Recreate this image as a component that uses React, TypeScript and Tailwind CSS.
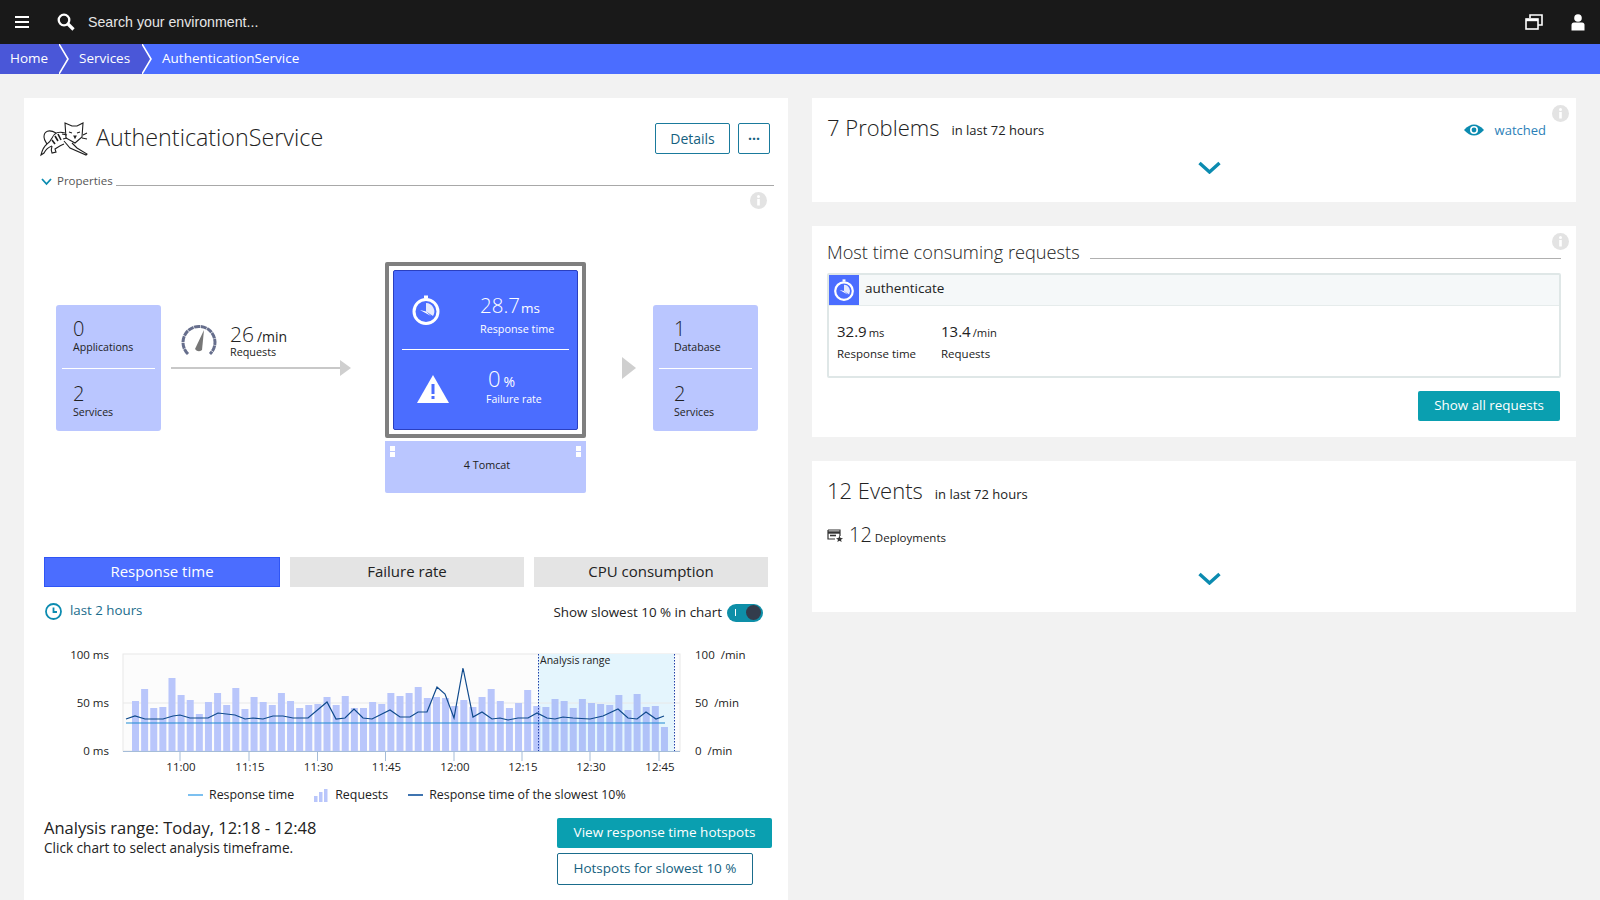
const barHeights = [
  50, 62, 43, 44, 73, 56, 51, 37, 49, 58, 46, 63, 42, 54, 49, 46, 58, 50, 43, 46, 47, 54, 46, 55, 43, 43, 49, 47, 58, 55,
  58, 64, 53, 54, 53, 45, 51, 44, 54, 62, 50, 43, 48, 61, 45, 44, 52, 50, 43, 52, 48, 47, 46, 56, 41, 57, 44, 45, 24,
];

// slowest 10% line, read off the chart
const slowLine = [
  [126, 719], [135, 716], [145, 719], [163, 719], [173, 716], [180, 715], [190, 718], [208, 718], [218, 713], [235, 715],
  [245, 719], [253, 718], [263, 719], [273, 716], [283, 716], [293, 718], [308, 718], [327, 702], [336, 719], [345, 718],
  [354, 709], [363, 718], [372, 719], [390, 710], [400, 717], [410, 717], [418, 712], [427, 712], [437, 687], [445, 694],
  [454, 718], [463, 668], [473, 717], [482, 712], [492, 719], [500, 718], [508, 720], [518, 718], [528, 718], [537, 713],
  [547, 718], [555, 719], [563, 717], [573, 718], [590, 719], [603, 716], [618, 709], [628, 718], [637, 719], [646, 712],
  [656, 719], [664, 716],
];

const timeTicks = [
  ["11:00", 180], ["11:15", 249], ["11:30", 317.5], ["11:45", 385.5], ["12:00", 454], ["12:15", 522], ["12:30", 590], ["12:45", 659],
] as const;

function Info({ className }: { className: string }) {
  return (
    <svg className={className} width="17" height="17" viewBox="0 0 17 17">
      <circle cx="8.5" cy="8.5" r="8.5" fill="#e3e3e3" />
      <rect x="7.2" y="7" width="2.6" height="6.5" fill="#fff" />
      <circle cx="8.5" cy="4.6" r="1.5" fill="#fff" />
    </svg>
  );
}

function ChevronTeal() {
  return (
    <svg width="23" height="13" viewBox="0 0 23 13">
      <path d="M1.5 2 L11.5 11 L21.5 2" fill="none" stroke="#0b8bb0" strokeWidth="3.4" />
    </svg>
  );
}

function Stopwatch({ size, stroke = 3 }: { size: number; stroke?: number }) {
  return (
    <svg width={size} height={size} viewBox="0 0 30 30">
      <circle cx="15" cy="16.5" r="12" fill="none" stroke="#fff" strokeWidth={stroke} />
      <rect x="13" y="0.5" width="4" height="3" fill="#fff" />
      <path d="M15 16.5 L15 8 A8.5 8.5 0 0 1 22 21 Z" fill="#fff" opacity="0.85" />
      <path d="M15 16.5 L9 15 L20 21 Z" fill="#fff" />
    </svg>
  );
}

function TomcatLogo() {
  return (
    <svg width="48" height="36" viewBox="0 0 48 36" fill="none" stroke="#1f1f1f" strokeWidth="1.1">
      <path d="M25 2 L32 5 L37 5 L43 2 L42 16 L35 22 L26 17 Z" fill="#fff" />
      <path d="M29 11 L32 12 M37 12 L40 11 M34 15 L36 15 L35 17 Z M27 14 L22 13 M43 14 L47 12 M27 17 L23 18 M42 17 L47 18" />
      <path d="M25 12 C19 10 14 12 12 17 C10 21 9 22 7 23 C3 26 2 30 1 34 L4 32 C6 28 9 26 12 25" />
      <path d="M16 12 C9 8 4 10 4 16 C4 19 6 21 7 23" />
      <path d="M12 25 C11 28 11 30 12 32 L16 31 L15 28 C18 26 21 24 24 23" />
      <path d="M24 20 L30 27 L46 34 L47 33 L37 27 L32 22" />
      <path d="M15 15 L18 20 M18 13 L21 19 M12 19 L15 23" strokeWidth="1.6" />
    </svg>
  );
}

function Gauge() {
  return (
    <svg width="36" height="34" viewBox="0 0 36 34" fill="none">
      <path d="M7 30 A16 16 0 1 1 29 30" stroke="#666e8c" strokeWidth="3" strokeDasharray="6 0.6" />
      <path d="M14 25 L23 6 L21 26 Q17 29 14 25 Z" fill="#777" />
    </svg>
  );
}

function SideBox({ top, topLabel, bottom, bottomLabel, inset }: { top: string; topLabel: string; bottom: string; bottomLabel: string; inset: string }) {
  return (
    <div className="flex h-[126px] w-[105px] flex-col rounded-[3px] bg-[#bac6ff] px-[6px] text-[#222]">
      <div className={`h-[63px] pt-[12px] ${inset}`}>
        <div className="text-[20px] font-light leading-[23px]">{top}</div>
        <div className="text-[10.6px] leading-[14px]">{topLabel}</div>
      </div>
      <div className="h-px bg-white" />
      <div className={`pt-[13px] ${inset}`}>
        <div className="text-[20px] font-light leading-[23px]">{bottom}</div>
        <div className="text-[10.6px] leading-[14px]">{bottomLabel}</div>
      </div>
    </div>
  );
}

function ChartTab({ label, active }: { label: string; active?: boolean }) {
  return (
    <div
      className={
        active
          ? "flex h-[30px] flex-1 items-center justify-center border border-[#2f55f5] bg-[#4b6dff] pb-[1px] text-[15px] text-white"
          : "flex h-[30px] flex-1 items-center justify-center bg-[#e4e4e4] pb-[1px] text-[15px] text-[#222]"
      }
    >
      {label}
    </div>
  );
}

function Chart() {
  const labelClass = "fill-[#222] text-[11.5px]";
  return (
    <svg className="mt-[18px] block" width="764" height="145" viewBox="24 640 764 145">
      <rect x="123" y="654" width="557" height="97" fill="#fcfcfc" stroke="#e8e8e8" />
      <rect x="538" y="654" width="136" height="97" fill="#e4f5fd" />
      <line x1="123" y1="703" x2="680" y2="703" stroke="#e8e8e8" />
      {barHeights.map((h, i) => (
        <rect key={i} x={132 + i * 9.12} y={751 - h} width="7" height={h} fill={i > 44 ? "#b0c2f8" : "#b9c6fb"} />
      ))}
      <line x1="126" y1="723" x2="665" y2="723" stroke="#1e8ad2" strokeWidth="1.2" />
      <polyline points={slowLine.map((p) => p.join(",")).join(" ")} fill="none" stroke="#0f4a8c" strokeWidth="1.2" />
      <line x1="538.5" y1="654" x2="538.5" y2="751" stroke="#1f3fa8" strokeDasharray="1.5 1.5" />
      <line x1="674.5" y1="654" x2="674.5" y2="751" stroke="#1f3fa8" strokeDasharray="1.5 1.5" />
      <line x1="123" y1="751.5" x2="680" y2="751.5" stroke="#a5bcd8" />
      <text x="540" y="664" className="fill-[#222] text-[10.5px]">Analysis range</text>

      <text x="109" y="659" textAnchor="end" className={labelClass}>100 ms</text>
      <text x="109" y="707" textAnchor="end" className={labelClass}>50 ms</text>
      <text x="109" y="755" textAnchor="end" className={labelClass}>0 ms</text>
      <text x="695" y="659" className={labelClass}>100 <tspan dx="3">/min</tspan></text>
      <text x="695" y="707" className={labelClass}>50 <tspan dx="3">/min</tspan></text>
      <text x="695" y="755" className={labelClass}>0 <tspan dx="3">/min</tspan></text>

      {timeTicks.map(([t, x]) => (
        <g key={t}>
          <line x1={x} y1="751" x2={x} y2="761" stroke="#a5bcd8" />
          <text x={x + 1} y="771" textAnchor="middle" className={labelClass}>{t}</text>
        </g>
      ))}
    </svg>
  );
}

export default function App() {
  return (
    <div className="flex h-[900px] w-[1600px] flex-col overflow-hidden bg-[#f2f2f2] font-['Open_Sans',sans-serif] text-[#222]">
      {/* top bar */}
      <div className="flex h-[44px] shrink-0 items-center bg-[#191919] text-white">
        <div className="ml-[15px] flex w-[14px] flex-col gap-[2.5px]">
          <div className="h-[2.5px] bg-white" />
          <div className="h-[2.5px] bg-white" />
          <div className="h-[2.5px] bg-white" />
        </div>
        <svg className="ml-[28px]" width="18" height="18" viewBox="0 0 18 18" fill="none" stroke="#fff">
          <circle cx="7" cy="7" r="5.3" strokeWidth="2.3" />
          <path d="M11 11 L16.5 16.5" strokeWidth="3.2" />
        </svg>
        <span className="ml-[13px] mt-[2px] font-['Liberation_Sans',Arial,sans-serif] text-[14.2px] text-[#e6e6e6]">Search your environment...</span>
        <div className="ml-auto flex items-center">
          <svg width="18" height="17" viewBox="0 0 18 17" fill="none" stroke="#fff" strokeWidth="1.6">
            <path d="M5 4 V1 H17 V11 H13" />
            <rect x="1" y="5" width="12" height="10" fill="#191919" />
            <path d="M1 6 H13" strokeWidth="2.4" />
          </svg>
          <svg className="ml-[28px] mr-[15px]" width="14" height="17" viewBox="0 0 14 17" fill="#fff">
            <circle cx="7" cy="4" r="3.8" />
            <path d="M0.5 16.5 V11 Q0.5 8.5 3 8.5 H11 Q13.5 8.5 13.5 11 V16.5 Z" />
          </svg>
        </div>
      </div>

      {/* breadcrumb */}
      <div className="flex h-[30px] shrink-0 items-center bg-[#4b6dff] text-[13.5px] font-medium text-white">
        <div className="flex h-full w-[59px] items-center bg-[#4a57d8] pb-[2px] pl-[10px]">Home</div>
        <svg width="10" height="30" viewBox="0 0 10 30" className="bg-[#4a57d8]">
          <path d="M0 0 L9 15 L0 30" fill="none" stroke="#fff" strokeWidth="1.6" />
        </svg>
        <div className="flex h-full w-[73px] items-center bg-[#4a57d8] pb-[2px] pl-[10px]">Services</div>
        <svg width="10" height="30" viewBox="0 0 10 30">
          <path d="M0 0 L9 15 L0 30" fill="#4a57d8" stroke="#fff" strokeWidth="1.6" />
        </svg>
        <div className="ml-[10px] pb-[2px]">AuthenticationService</div>
      </div>

      <div className="flex flex-1 gap-[24px] px-[24px] pt-[24px]">
        {/* left card */}
        <div className="h-[900px] w-[764px] shrink-0 bg-white">
          <div className="mt-[25px] flex h-[31px] items-center pl-[16px] pr-[18px]">
            <TomcatLogo />
            <h1 className="mb-[2px] ml-[8px] text-[23.3px] font-light leading-none">AuthenticationService</h1>
            <button className="ml-auto flex h-[31px] w-[75px] items-center justify-center rounded-[2px] border border-[#1a7a9c] text-[14px] text-[#155f80]">Details</button>
            <button className="ml-[8px] flex h-[31px] w-[32px] items-center justify-center rounded-[2px] border border-[#1a7a9c] text-[14px] font-bold text-[#155f80]">···</button>
          </div>

          <div className="mt-[20px] flex h-[16px] items-center pl-[17px] pr-[14px]">
            <svg width="11" height="8" viewBox="0 0 11 8">
              <path d="M1 1 L5.5 6 L10 1" fill="none" stroke="#0b8bb0" strokeWidth="1.8" />
            </svg>
            <span className="mb-[2px] ml-[5px] text-[11.5px] text-[#555]">Properties</span>
            <div className="ml-[3px] mt-[6px] h-px flex-1 bg-[#a8a8a8]" />
          </div>

          <div className="mt-[2px] flex justify-end pr-[21px]">
            <Info className="block" />
          </div>

          {/* service flow */}
          <div className="mt-[53px] flex h-[231px] items-start pl-[32px]">
            <div className="mt-[43px]">
              <SideBox top="0" topLabel="Applications" bottom="2" bottomLabel="Services" inset="pl-[11px]" />
            </div>

            <div className="ml-[10px] mt-[62px] w-[180px]">
              <div className="flex items-center pl-[10px]">
                <Gauge />
                <div className="ml-[13px]">
                  <div className="pt-[1px] leading-[19px]">
                    <span className="text-[21px] font-light">26</span>
                    <span className="ml-[3px] text-[14px]">/min</span>
                  </div>
                  <div className="text-[10.8px] leading-[12px]">Requests</div>
                </div>
              </div>
              <div className="mt-[2px] flex items-center">
                <div className="h-[2px] flex-1 bg-[#c8c8c8]" />
                <div className="h-0 w-0 border-y-[8px] border-l-[11px] border-y-transparent border-l-[#cfcfcf]" />
              </div>
            </div>

            <div className="ml-[34px] w-[201px]">
              <div className="h-[176px] rounded-[2px] border-[4px] border-[#7f7f7f] bg-white p-[4px]">
                <div className="h-full rounded-[2px] border border-[#2a3fc0] bg-[#4b6dff] px-[8px] text-white">
                  <div className="flex h-[78px] items-center pl-[9px]">
                    <Stopwatch size={30} />
                    <div className="ml-[39px] mt-[6px]">
                      <div className="pt-[3px] leading-[25px]">
                        <span className="text-[20.5px] font-light">28.7</span>
                        <span className="ml-[1px] text-[13.5px]">ms</span>
                      </div>
                      <div className="text-[10.8px] leading-[16px]">Response time</div>
                    </div>
                  </div>
                  <div className="h-px bg-white" />
                  <div className="flex h-[78px] items-center pl-[15px]">
                    <svg width="32" height="28" viewBox="0 0 32 28">
                      <path d="M16 0 L32 28 H0 Z" fill="#fff" />
                      <rect x="14.5" y="9" width="3" height="10" fill="#4b6dff" />
                      <rect x="14.5" y="21" width="3" height="3" fill="#4b6dff" />
                    </svg>
                    <div className="-mt-[6px] ml-[37px]">
                      <div className="leading-[23px]">
                        <span className="ml-[2px] text-[22px] font-light">0</span>
                        <span className="ml-[3px] text-[14px]">%</span>
                      </div>
                      <div className="text-[10.5px] leading-[12px]">Failure rate</div>
                    </div>
                  </div>
                </div>
              </div>
              <div className="mt-[3px] flex h-[52px] justify-between rounded-b-[2px] bg-[#bac6ff] px-[5px] pt-[5px]">
                <div className="flex flex-col gap-[1px]">
                  <div className="h-[5px] w-[5px] bg-white" />
                  <div className="h-[5px] w-[5px] bg-white" />
                </div>
                <span className="ml-[3px] mt-[11px] text-[10.8px] leading-[16px]">4 Tomcat</span>
                <div className="flex flex-col gap-[1px]">
                  <div className="h-[5px] w-[5px] bg-white" />
                  <div className="h-[5px] w-[5px] bg-white" />
                </div>
              </div>
            </div>

            <div className="ml-[36px] mt-[95px] h-0 w-0 border-y-[11px] border-l-[14px] border-y-transparent border-l-[#cfcfcf]" />

            <div className="ml-[17px] mt-[43px]">
              <SideBox top="1" topLabel="Database" bottom="2" bottomLabel="Services" inset="pl-[15px]" />
            </div>
          </div>

          {/* tabs */}
          <div className="mt-[64px] flex gap-[10px] px-[20px]">
            <ChartTab label="Response time" active />
            <ChartTab label="Failure rate" />
            <ChartTab label="CPU consumption" />
          </div>

          <div className="mt-[13px] flex h-[22px] items-center pl-[21px] pr-[25px]">
            <svg width="17" height="17" viewBox="0 0 17 17" fill="none" stroke="#0b8bb0" strokeWidth="1.8">
              <circle cx="8.5" cy="8.5" r="7.5" />
              <path d="M8.5 4.5 V9 H12" />
            </svg>
            <span className="ml-[8px] text-[13.3px] text-[#1a6c8c]">last 2 hours</span>
            <span className="ml-auto mt-[2px] text-[13.4px]">Show slowest 10 % in chart</span>
            <div className="ml-[5px] mt-[3px] flex h-[18px] w-[36px] items-center rounded-full bg-[#0e8fa8] pl-[8px]">
              <div className="h-[7px] w-px bg-white" />
              <div className="ml-auto mr-[2px] h-[15px] w-[15px] rounded-full bg-[#333c4c]" />
            </div>
          </div>

          <Chart />

          {/* legend */}
          <div className="flex h-[20px] items-center pl-[164px] text-[12.4px]">
            <div className="h-[2px] w-[15px] bg-[#7cc0f0]" />
            <span className="ml-[6px]">Response time</span>
            <svg className="ml-[20px]" width="15" height="13" viewBox="0 0 15 13" fill="#b9c6fb">
              <rect x="0" y="7" width="3.5" height="6" />
              <rect x="5" y="3" width="3.5" height="10" />
              <rect x="10" y="0" width="3.5" height="13" />
            </svg>
            <span className="ml-[6px]">Requests</span>
            <div className="ml-[20px] h-[2px] w-[15px] bg-[#3f74b0]" />
            <span className="ml-[6px]">Response time of the slowest 10%</span>
          </div>

          <div className="mt-[13px] flex items-start justify-between pl-[20px] pr-[16px]">
            <div>
              <div className="text-[16.5px] leading-[20px]">Analysis range: Today, 12:18 - 12:48</div>
              <div className="text-[13.6px] leading-[20px]">Click chart to select analysis timeframe.</div>
            </div>
            <div className="flex w-[215px] flex-col items-start gap-[5px]">
              <button className="flex h-[30px] w-[215px] items-center justify-center rounded-[2px] bg-[#0a9fb0] pb-[2px] text-[13.5px] text-white">View response time hotspots</button>
              <button className="flex h-[32px] w-[196px] items-center justify-center rounded-[2px] border border-[#1a6c8c] pb-[2px] text-[13.5px] text-[#155f80]">Hotspots for slowest 10 %</button>
            </div>
          </div>
        </div>

        {/* right column */}
        <div className="flex w-[764px] shrink-0 flex-col gap-[24px]">
          <div className="relative h-[104px] bg-white pl-[15px] pr-[30px] pt-[14px]">
            <Info className="absolute right-[7px] top-[7px]" />
            <div className="flex h-[32px] items-center">
              <span className="mb-[2px] text-[22px] font-light">7 Problems</span>
              <span className="ml-[12px] mt-[6px] text-[13px]">in last 72 hours</span>
              <svg className="ml-auto mt-[4px]" width="20" height="14" viewBox="0 0 20 14">
                <path d="M0 7 Q10 -4 20 7 Q10 18 0 7 Z" fill="#0b8bb0" />
                <circle cx="10" cy="7" r="4" fill="#fff" />
                <circle cx="10" cy="7" r="2.4" fill="#0b8bb0" />
              </svg>
              <span className="ml-[11px] mt-[6px] text-[13px] text-[#2c7fb8]">watched</span>
            </div>
            <div className="mt-[17px] flex justify-center pl-[45px]">
              <ChevronTeal />
            </div>
          </div>

          <div className="relative h-[211px] bg-white pt-[12px]">
            <Info className="absolute right-[7px] top-[7px]" />
            <div className="flex h-[28px] items-center pl-[15px] pr-[15px]">
              <span className="mt-[2px] text-[18.2px] font-light">Most time consuming requests</span>
              <div className="ml-[10px] mt-[12px] h-px flex-1 bg-[#b0b0b0]" />
            </div>
            <div className="ml-[15px] mr-[15px] mt-[7px] h-[105px] rounded-[2px] border-2 border-[#dfe7e7]">
              <div className="flex h-[30px] items-center bg-[#f5f8f9]">
                <div className="flex h-[30px] w-[30px] items-center justify-center bg-[#4b6dff]">
                  <Stopwatch size={22} />
                </div>
                <span className="mb-[4px] ml-[6px] text-[13.5px]">authenticate</span>
              </div>
              <div className="flex border-t border-[#e6ecec] pl-[8px] pt-[14px]">
                <div className="w-[104px]">
                  <div className="leading-[22px]">
                    <span className="text-[15px]">32.9</span>
                    <span className="ml-[2px] text-[11.2px]">ms</span>
                  </div>
                  <div className="text-[11.5px] leading-[20px]">Response time</div>
                </div>
                <div>
                  <div className="leading-[22px]">
                    <span className="text-[15px]">13.4</span>
                    <span className="ml-[2px] text-[11.2px]">/min</span>
                  </div>
                  <div className="text-[11.5px] leading-[20px]">Requests</div>
                </div>
              </div>
            </div>
            <div className="mt-[13px] flex justify-end pr-[16px]">
              <button className="flex h-[30px] w-[142px] items-center justify-center rounded-[2px] bg-[#0a9fb0] pb-[2px] text-[13.4px] text-white">Show all requests</button>
            </div>
          </div>

          <div className="h-[151px] bg-white pl-[15px] pt-[16px]">
            <div className="flex h-[28px] items-center">
              <span className="mb-[2px] text-[22px] font-light">12 Events</span>
              <span className="ml-[12px] mt-[8px] text-[13px]">in last 72 hours</span>
            </div>
            <div className="mt-[18px] flex h-[24px] items-center">
              <svg width="16" height="14" viewBox="0 0 16 14" fill="none" stroke="#333" strokeWidth="1.2">
                <path d="M1 2 H13 V8 M1 2 V11 H8" />
                <path d="M1 4.5 H13" strokeWidth="2.4" />
                <path d="M3 7.5 H9" strokeWidth="1.6" />
                <path d="M12.5 7.5 L13.5 10 L16 10.2 L14 11.7 L14.7 14 L12.5 12.7 L10.3 14 L11 11.7 L9 10.2 L11.5 10 Z" fill="#333" stroke="none" />
              </svg>
              <span className="ml-[6px] text-[20px] font-light">12</span>
              <span className="ml-[3px] mt-[6px] text-[11.5px]">Deployments</span>
            </div>
            <div className="mt-[25px] flex justify-center pl-[15px] pr-[15px]">
              <div className="ml-[15px]"><ChevronTeal /></div>
            </div>
          </div>
        </div>
      </div>
    </div>
  );
}
